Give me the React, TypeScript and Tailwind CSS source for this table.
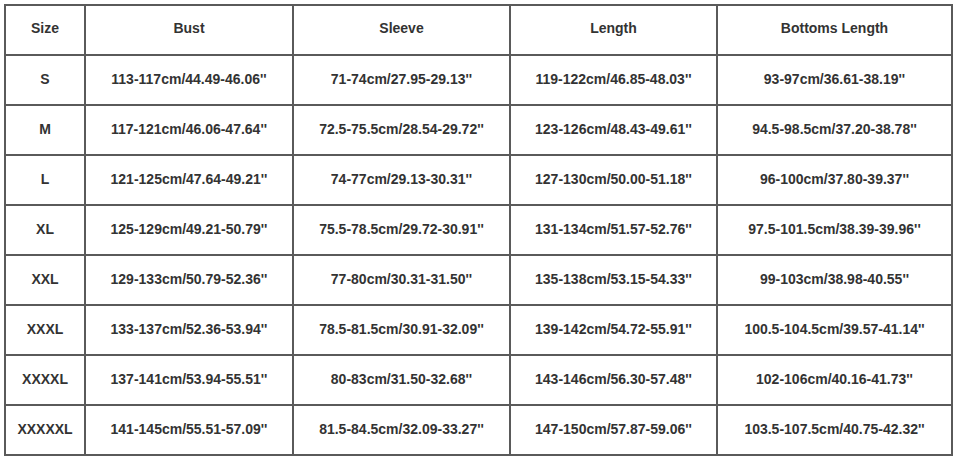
const headers = ["Size", "Bust", "Sleeve", "Length", "Bottoms Length"];

const rows: string[][] = [
  ["S", "113-117cm/44.49-46.06''", "71-74cm/27.95-29.13''", "119-122cm/46.85-48.03''", "93-97cm/36.61-38.19''"],
  ["M", "117-121cm/46.06-47.64''", "72.5-75.5cm/28.54-29.72''", "123-126cm/48.43-49.61''", "94.5-98.5cm/37.20-38.78''"],
  ["L", "121-125cm/47.64-49.21''", "74-77cm/29.13-30.31''", "127-130cm/50.00-51.18''", "96-100cm/37.80-39.37''"],
  ["XL", "125-129cm/49.21-50.79''", "75.5-78.5cm/29.72-30.91''", "131-134cm/51.57-52.76''", "97.5-101.5cm/38.39-39.96''"],
  ["XXL", "129-133cm/50.79-52.36''", "77-80cm/30.31-31.50''", "135-138cm/53.15-54.33''", "99-103cm/38.98-40.55''"],
  ["XXXL", "133-137cm/52.36-53.94''", "78.5-81.5cm/30.91-32.09''", "139-142cm/54.72-55.91''", "100.5-104.5cm/39.57-41.14''"],
  ["XXXXL", "137-141cm/53.94-55.51''", "80-83cm/31.50-32.68''", "143-146cm/56.30-57.48''", "102-106cm/40.16-41.73''"],
  ["XXXXXL", "141-145cm/55.51-57.09''", "81.5-84.5cm/32.09-33.27''", "147-150cm/57.87-59.06''", "103.5-107.5cm/40.75-42.32''"],
];

export default function App() {
  return (
    <div className="w-[956px] h-[457px] bg-white pt-[4px] pl-[4px] overflow-hidden">
      <div
        className="grid grid-cols-[78px_206px_215px_205px_233px] auto-rows-[48px] gap-[2px] p-[2px] bg-[#5a5a5a] w-fit text-[14px] font-bold text-[#333]"
        style={{ fontFamily: '"Liberation Sans", Arial, sans-serif' }}
      >
        {headers.map((h) => (
          <div key={h} className="bg-white flex items-center justify-center pb-[4px]">
            {h}
          </div>
        ))}
        {rows.map((row) =>
          row.map((cell, i) => (
            <div key={row[0] + i} className="bg-white flex items-center justify-center whitespace-nowrap pb-[1px]">
              {cell}
            </div>
          ))
        )}
      </div>
    </div>
  );
}
